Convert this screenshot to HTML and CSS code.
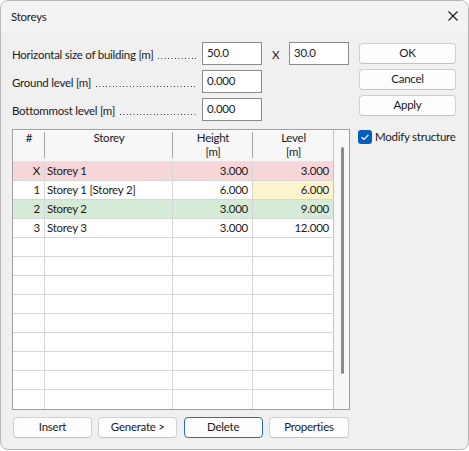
FILE: index.html
```html
<!DOCTYPE html>
<html>
<head>
<meta charset="utf-8">
<link rel="stylesheet" href="styles.css">
</head>
<body>
<div class="window">
  <div class="titlebar">
    <span class="title">Storeys</span>
    <svg class="close" width="10" height="10" viewBox="0 0 10 10"><path d="M0.5 0.5 L9.5 9.5 M9.5 0.5 L0.5 9.5" stroke="#1a1a1a" stroke-width="1.1" fill="none"/></svg>
  </div>
  <div class="body">
    <div class="main">
      <div class="fields">
        <div class="frow">
          <div class="label"><span class="ltext">Horizontal size of building [m]</span><span class="leader"></span></div>
          <div class="input">50.0</div>
          <span class="times">X</span>
          <div class="input">30.0</div>
        </div>
        <div class="frow">
          <div class="label"><span class="ltext">Ground level [m]</span><span class="leader"></span></div>
          <div class="input">0.000</div>
        </div>
        <div class="frow">
          <div class="label"><span class="ltext">Bottommost level [m]</span><span class="leader"></span></div>
          <div class="input">0.000</div>
        </div>
      </div>
      <div class="gridbox">
        <div class="table">
          <div class="hcell">#</div>
          <div class="hcell">Storey</div>
          <div class="hcell">Height<br>[m]</div>
          <div class="hcell last">Level<br>[m]</div>

          <div class="cell num pink">X</div><div class="cell txt pink">Storey 1</div><div class="cell num pink">3.000</div><div class="cell num pink">3.000</div>
          <div class="cell num">1</div><div class="cell txt">Storey 1 [Storey 2]</div><div class="cell num">6.000</div><div class="cell num yellow">6.000</div>
          <div class="cell num green">2</div><div class="cell txt green">Storey 2</div><div class="cell num green">3.000</div><div class="cell num green">9.000</div>
          <div class="cell num">3</div><div class="cell txt">Storey 3</div><div class="cell num">3.000</div><div class="cell num">12.000</div>

          <div class="cell"></div><div class="cell"></div><div class="cell"></div><div class="cell"></div>
          <div class="cell"></div><div class="cell"></div><div class="cell"></div><div class="cell"></div>
          <div class="cell"></div><div class="cell"></div><div class="cell"></div><div class="cell"></div>
          <div class="cell"></div><div class="cell"></div><div class="cell"></div><div class="cell"></div>
          <div class="cell"></div><div class="cell"></div><div class="cell"></div><div class="cell"></div>
          <div class="cell"></div><div class="cell"></div><div class="cell"></div><div class="cell"></div>
          <div class="cell"></div><div class="cell"></div><div class="cell"></div><div class="cell"></div>
          <div class="cell"></div><div class="cell"></div><div class="cell"></div><div class="cell"></div>
          <div class="cell end"></div><div class="cell end"></div><div class="cell end"></div><div class="cell end"></div>
        </div>
        <div class="scroll"><div class="thumb"></div></div>
      </div>
      <div class="buttons">
        <div class="btn">Insert</div>
        <div class="btn">Generate &gt;</div>
        <div class="btn focus">Delete</div>
        <div class="btn wide">Properties</div>
      </div>
    </div>
    <div class="side">
      <div class="btn side-btn">OK</div>
      <div class="btn side-btn">Cancel</div>
      <div class="btn side-btn">Apply</div>
      <div class="check">
        <span class="box"><svg width="14" height="14" viewBox="0 0 14 14"><path d="M3.6 7.2 L6 9.5 L10.4 4.8" stroke="#ffffff" stroke-width="1.2" fill="none"/></svg></span>
        <span>Modify structure</span>
      </div>
    </div>
  </div>
</div>
</body>
</html>
```

FILE: styles.css
```css
* { box-sizing: border-box; }
html, body { margin: 0; padding: 0; background: #ffffff; }
body {
  font-family: Lato, "Liberation Sans", sans-serif;
  font-size: 11.5px;
  letter-spacing: -0.25px;
  color: #1b1b1b;
}
.window {
  width: 469px;
  height: 450px;
  border: 1px solid #b8b8b8;
  border-radius: 8px;
  background: #f0f0f0;
  overflow: hidden;
  display: flex;
  flex-direction: column;
}
.titlebar {
  height: 30px;
  background: #f3f3f3;
  display: flex;
  align-items: center;
  justify-content: space-between;
  padding: 0 10px 0 10px;
}
.title { line-height: 16px; padding-top: 1px; }
.close { margin-top: -1px; }
.body {
  flex: 1;
  display: flex;
  padding: 11px 0 0 11px;
}
.main {
  width: 338px;
  display: flex;
  flex-direction: column;
}
.fields {
  display: flex;
  flex-direction: column;
  gap: 5px;
}
.frow {
  display: flex;
  align-items: center;
  height: 23px;
}
.label {
  width: 184px;
  margin-right: 6px;
  display: flex;
  white-space: nowrap;
  padding-top: 3px;
  line-height: 16px;
}
.ltext { flex: none; margin-right: 5px; }
.leader {
  flex: 1;
  height: 16px;
  background-image: linear-gradient(to right, #1b1b1b 1.2px, transparent 1.2px);
  background-size: 3.4px 1.2px;
  background-repeat: repeat-x;
  background-position: left 0 bottom 4px;
}
.input {
  width: 60px;
  height: 23px;
  border: 1px solid #8c8c8c;
  background: #ffffff;
  padding: 2px 0 0 4px;
  line-height: 16px;
}
.times {
  width: 27px;
  text-align: center;
  padding-top: 2px;
}
.gridbox {
  margin-top: 8px;
  height: 281px;
  border: 1px solid #a0a0a0;
  display: flex;
  background: #ffffff;
}
.table {
  width: 321px;
  display: grid;
  grid-template-columns: 32px 128px 80px 81px;
  grid-template-rows: 32px repeat(13, 19px);
  align-content: start;
}
.hcell {
  background: #f7f7f7;
  text-align: center;
  line-height: 14px;
  padding-top: 1px;
  position: relative;
  border-bottom: 1px solid #e3e3e3;
}
.hcell::after {
  content: "";
  position: absolute;
  right: 0;
  top: 2px;
  bottom: 3px;
  width: 1px;
  background: #a6a6a6;
}
.hcell.last::after { top: 0; bottom: -1px; background: #c4c4c4; }
.cell {
  border-right: 1px solid #d6d6d6;
  border-bottom: 1px solid #d6d6d6;
  line-height: 18px;
  white-space: nowrap;
  overflow: hidden;
}
.cell:nth-child(4n) { border-right-color: #c4c4c4; }
.cell.end { border-bottom: none; }
.num { text-align: right; padding-right: 4px; }
.txt { padding-left: 2px; }
.pink { background: #f6d6d8; }
.green { background: #d6ead8; }
.yellow { background: #fdf3cd; }
.scroll {
  flex: 1;
  background: #f7f7f7;
  padding-top: 17px;
  padding-left: 7px;
}
.thumb {
  width: 3px;
  height: 227px;
  background: #8b8b8b;
  border-radius: 1.5px;
}
.buttons {
  margin-top: 7px;
  display: flex;
  justify-content: space-between;
  padding: 0 1px 0 1px;
}
.btn {
  width: 79px;
  height: 21px;
  border: 1px solid #d0d0d0;
  border-bottom-color: #c2c2c2;
  border-radius: 4px;
  background: #fdfdfd;
  text-align: center;
  line-height: 18px;
}
.btn.wide { width: 80px; }
.btn.focus { border-color: #1f6fc5; }
.side {
  width: 97px;
  margin-left: 9px;
  margin-top: 1px;
  display: flex;
  flex-direction: column;
  gap: 5px;
}
.side-btn { width: 97px; }
.check {
  margin-top: 9px;
  margin-left: -1px;
  display: flex;
  align-items: center;
  gap: 3px;
  white-space: nowrap;
  line-height: 14px;
}
.box {
  width: 14px;
  height: 14px;
  border-radius: 3px;
  background: #005fb8;
  display: flex;
}
```
